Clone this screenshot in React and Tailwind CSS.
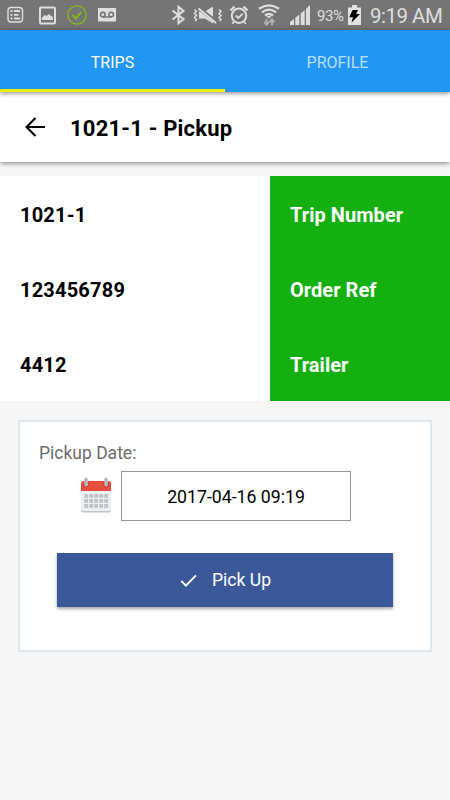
import React, { useState } from 'react';

const trip = [
  { label: 'Trip Number', value: '1021-1' },
  { label: 'Order Ref', value: '123456789' },
  { label: 'Trailer', value: '4412' },
];

const StatusBar = () => (
  <div className="flex h-[30px] shrink-0 items-center bg-[#757575] text-[#dedede]">
    {/* Notifications */}
    <svg className="ml-[7px] h-[18px] w-[17px]" viewBox="0 0 17 18" fill="none" stroke="currentColor">
      <rect x="1" y="1.5" width="14.5" height="14.5" rx="3" strokeWidth="1.4" />
      <path d="M3.5 5h2M7 5h6M3.5 8.8h2M7 8.8h4.5M3.5 12.5h2M7 12.5h6" strokeWidth="1.8" />
    </svg>
    <svg className="ml-[15px] h-[19px] w-[17px]" viewBox="0 0 17 19" fill="none" stroke="currentColor">
      <rect x="1" y="1.5" width="15" height="16" rx="1" strokeWidth="2" />
      <path d="M3 14v-2.2l3-3 1.5 1.4L9.7 8l2.1 2 .7-.5L14 12v2z" fill="currentColor" stroke="none" />
    </svg>
    <svg className="ml-[11px] h-5 w-5 text-[#83b81a]" viewBox="0 0 20 20" fill="none" stroke="currentColor">
      <circle cx="10" cy="10" r="9.1" strokeWidth="1.3" />
      <path d="M5.5 9.8l3.3 3.6 5.7-6.6" strokeWidth="1.9" />
    </svg>
    <svg className="ml-[11px] h-[14px] w-[18px]" viewBox="0 0 18 14" fill="none">
      <rect width="18" height="13.5" fill="currentColor" />
      <g stroke="#707070" strokeWidth="1.5">
        <circle cx="4.8" cy="6.5" r="2.3" />
        <circle cx="13.2" cy="6.5" r="2.3" />
        <path d="M4.8 9h8.4" />
      </g>
    </svg>

    {/* System */}
    <svg className="ml-[55px] h-[20px] w-[14px]" viewBox="0 0 14 20" fill="none" stroke="currentColor" strokeWidth="2">
      <path d="M1.5 5.5l11 8.7-5 4V1.8l5 4-11 8.7" />
    </svg>
    <svg className="ml-[8px] h-[20px] w-[30px]" viewBox="0 0 30 20" fill="none" stroke="currentColor">
      <path d="M1.5 4.5l2 2-2 2 2 2-2 2 2 2L2 16M26 4.5l2 2-2 2 2 2-2 2 2 2-1.5 1.500" strokeWidth="1.5" />
      <path d="M6 6.5h6l8-5v17l-8-5H6z" fill="currentColor" stroke="none" />
      <path d="M5 2.5L23.5 17" stroke="#757575" strokeWidth="4" />
      <path d="M5.5 3.5L23 18" strokeWidth="2" />
    </svg>
    <svg className="ml-[6px] h-[20px] w-[20px]" viewBox="0 0 20 20" fill="none" stroke="currentColor">
      <circle cx="10" cy="10.8" r="7.2" strokeWidth="2" />
      <path d="M1.5 5.5l4-3.8M18.5 5.5l-4-3.8" strokeWidth="2.4" />
      <path d="M6.7 10.5l2.6 2.4 4.5-4.2" strokeWidth="1.8" />
      <path d="M5 16.5l-1.7 2.2M15 16.5l1.7 2.2" strokeWidth="1.8" />
    </svg>
    <svg className="ml-[9px] h-[24px] w-[22px]" viewBox="0 0 22 24" fill="none" stroke="currentColor">
      <path d="M1 5.8Q11-1.2 21 5.8M4 9.3Q11 4 18 9.3M7 12.5q4-3 8 0" strokeWidth="2.3" />
      <path d="M8.5 13h5L11 15.5z" fill="currentColor" stroke="none" />
      <path d="M8.500 15.5v6M6 18.8l2.5 3 2.5-3M14 22.5v-6M11.5 19.3l2.5-3 2.5 3" stroke="#b5b5b5" strokeWidth="1.7" />
    </svg>
    <svg className="ml-[10px] h-[20px] w-[20px]" viewBox="0 0 20 20" fill="currentColor">
      <path d="M0 20v-3l4-3v6zM5.3 20v-7l4-3.5V20zM10.7 20V8.5l4-3.5v15zM16 20V3.7L20 0v20z" />
    </svg>
    <span className="ml-[7px] w-[28px] pt-[2px] text-[15px] leading-none tracking-[-0.4px]">93%</span>
    <svg className="ml-[3px] h-[20px] w-[13px]" viewBox="0 0 13 20">
      <path d="M0 2.5h4V0h5v2.5h4V20H0z" fill="#e2e2e2" />
      <path d="M4.5 5H10L8 9h4L3.5 17.5 5 12.3H1.3z" fill="#000" />
    </svg>
    <span className="ml-[9px] pt-[2px] whitespace-nowrap text-[20.5px] leading-none tracking-[-0.5px]">9:19 AM</span>
  </div>
);

const CalendarIcon = () => (
  <svg className="h-[36px] w-[32px]" viewBox="0 0 32 36">
    <rect x="1" y="6" width="30" height="29.5" rx="2.5" fill="#bdc3c7" />
    <rect x="1" y="5" width="30" height="29" rx="2.5" fill="#ecf0f1" />
    <path d="M1 14V6.5A2.5 2.5 0 013.5 4h25A2.5 2.5 0 0131 6.5V14z" fill="#e84c3d" />
    <circle cx="6" cy="7.5" r="2.7" fill="#c03a2b" />
    <circle cx="26" cy="7.5" r="2.7" fill="#c03a2b" />
    <rect x="4.3" y="0.5" width="3.6" height="9" rx="1.8" fill="#b5bbbf" />
    <rect x="24.3" y="0.5" width="3.6" height="9" rx="1.8" fill="#b5bbbf" />
    {[17, 22, 27].map((y) =>
      [4, 9, 14, 19, 24].map((x) => (
        <rect key={`${x}-${y}`} x={x + 0.3} y={y} width="3.8" height="3.8" fill="#bdc3c7" />
      ))
    )}
  </svg>
);

const App = () => {
  const [tab, setTab] = useState('TRIPS');

  return (
    <div className="flex h-[800px] w-[450px] flex-col overflow-hidden bg-[#f6f6f6] font-['Roboto',sans-serif] text-black">
      <StatusBar />

      <nav className="relative z-20 flex h-[62px] shrink-0 border-t border-[#0398ff] bg-[#2196f3] shadow-[0_1px_5px_rgba(0,0,0,0.5)]">
        {['TRIPS', 'PROFILE'].map((name) => (
          <button
            key={name}
            onClick={() => setTab(name)}
            className={`flex-1 border-b-3 pt-[5px] text-base ${
              tab === name ? 'border-[#ffeb05] text-white' : 'border-transparent text-white/70'
            }`}
          >
            {name}
          </button>
        ))}
      </nav>

      <header className="relative z-10 flex h-[70px] shrink-0 items-center bg-white pl-[25px] shadow-[0_1px_5px_rgba(0,0,0,0.5)]">
        <svg className="h-5 w-5" viewBox="0 0 20 20" fill="none" stroke="#000" strokeWidth="2.1">
          <path d="M10.5 1L1.5 10l9 9M1.5 10H20" />
        </svg>
        <h1 className="ml-[25px] pt-[3px] text-[22px] font-bold tracking-[0.2px]">1021-1 - Pickup</h1>
      </header>

      <section className="mt-[14px] shrink-0">
        {trip.map((row) => (
          <div key={row.label} className="flex h-[75px] text-xl font-bold">
            <div className="flex w-[270px] items-center bg-white pt-[2px] pl-5 tracking-[0.2px]">{row.value}</div>
            <div className="flex flex-1 items-center bg-[#13b00f] pt-[2px] pl-5 tracking-[0.05px] text-white">{row.label}</div>
          </div>
        ))}
      </section>

      <section className="mx-[18px] mt-[19px] h-[232px] shrink-0 border-2 border-[#dfe6ec] bg-white">
        <p className="mt-[19px] ml-[19px] h-[30px] text-[17.5px] leading-6 text-[#6c6c6c]">Pickup Date:</p>
        <div className="flex">
          <div className="ml-[60px] pt-[6px]">
            <CalendarIcon />
          </div>
          <div className="ml-[9px] flex h-[50px] w-[230px] items-center justify-center border border-[#949494] pt-[2px] text-[17.7px]">
            2017-04-16 09:19
          </div>
        </div>
        <button className="mt-8 ml-[37px] flex h-[54px] w-[336px] items-center justify-center bg-[#3b5998] pt-px pl-px text-[17.6px] text-white shadow-[0_2px_3px_rgba(0,0,0,0.35)]">
          <svg className="mr-[15px] h-[13px] w-[17px]" viewBox="0 0 18 14" fill="none" stroke="currentColor" strokeWidth="2">
            <path d="M1.2 7.5l5 5L17 1.5" />
          </svg>
          Pick Up
        </button>
      </section>
    </div>
  );
};

export default App;
